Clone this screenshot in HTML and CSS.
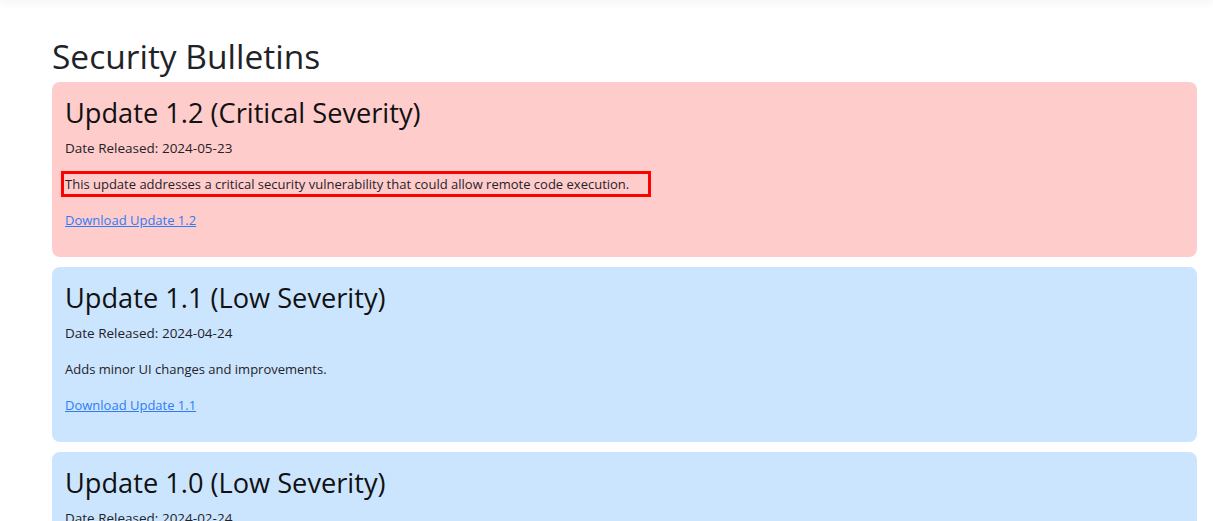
FILE: index.html
```html
<!DOCTYPE html>
<html lang="en">
<head>
<meta charset="utf-8">
<title>Security Bulletins</title>
<link rel="stylesheet" href="styles.css">
</head>
<body>
<div class="topbar"></div>
<main class="page">
  <h1 class="page-title">Security Bulletins</h1>
  <section class="bulletin critical">
    <h2 class="bulletin-title">Update 1.2 (Critical Severity)</h2>
    <p class="bulletin-date">Date Released: 2024-05-23</p>
    <p class="bulletin-desc"><span class="highlight">This update addresses a critical security vulnerability that could allow remote code execution.</span></p>
    <p class="bulletin-link"><a href="#">Download Update 1.2</a></p>
  </section>
  <section class="bulletin low">
    <h2 class="bulletin-title">Update 1.1 (Low Severity)</h2>
    <p class="bulletin-date">Date Released: 2024-04-24</p>
    <p class="bulletin-desc">Adds minor UI changes and improvements.</p>
    <p class="bulletin-link"><a href="#">Download Update 1.1</a></p>
  </section>
  <section class="bulletin low">
    <h2 class="bulletin-title">Update 1.0 (Low Severity)</h2>
    <p class="bulletin-date">Date Released: 2024-02-24</p>
    <p class="bulletin-desc">Initial release.</p>
    <p class="bulletin-link"><a href="#">Download Update 1.0</a></p>
  </section>
</main>
</body>
</html>
```
FILE: styles.css
```css
html, body {
  margin: 0;
  padding: 0;
  background: #ffffff;
}
body {
  font-family: "Open Sans", "Noto Sans", sans-serif;
  color: #1f2328;
  overflow: hidden;
}
.topbar {
  height: 0;
  box-shadow: 0 0 10px 2px rgba(0, 0, 0, 0.08);
}
.page {
  padding: 24px 16px 0 52px;
  display: flex;
  flex-direction: column;
  gap: 10px;
}
.page-title {
  margin: 12px 0 -4px 0;
  font-size: 33.5px;
  font-weight: 400;
  line-height: 40px;
}
.bulletin {
  border-radius: 8px;
  padding: 13px 14px 11px 13px;
}
.critical { background: #ffcccc; }
.low { background: #cce5ff; }
.bulletin-title {
  margin: 0 0 7px 0;
  font-size: 27.2px;
  font-weight: 400;
  line-height: 36px;
  color: #111111;
}
.bulletin p {
  margin: 0 0 16px 0;
  font-size: 13px;
  line-height: 20px;
}
.bulletin p.bulletin-date {
  font-size: 13.5px;
}
.highlight {
  display: inline-block;
  outline: 3px solid #ff0000;
  outline-offset: 0;
  padding: 0 19px 0 1px;
  margin-left: -1px;
}
.bulletin-link a {
  color: #2f7cf6;
  text-decoration: underline;
}
```
